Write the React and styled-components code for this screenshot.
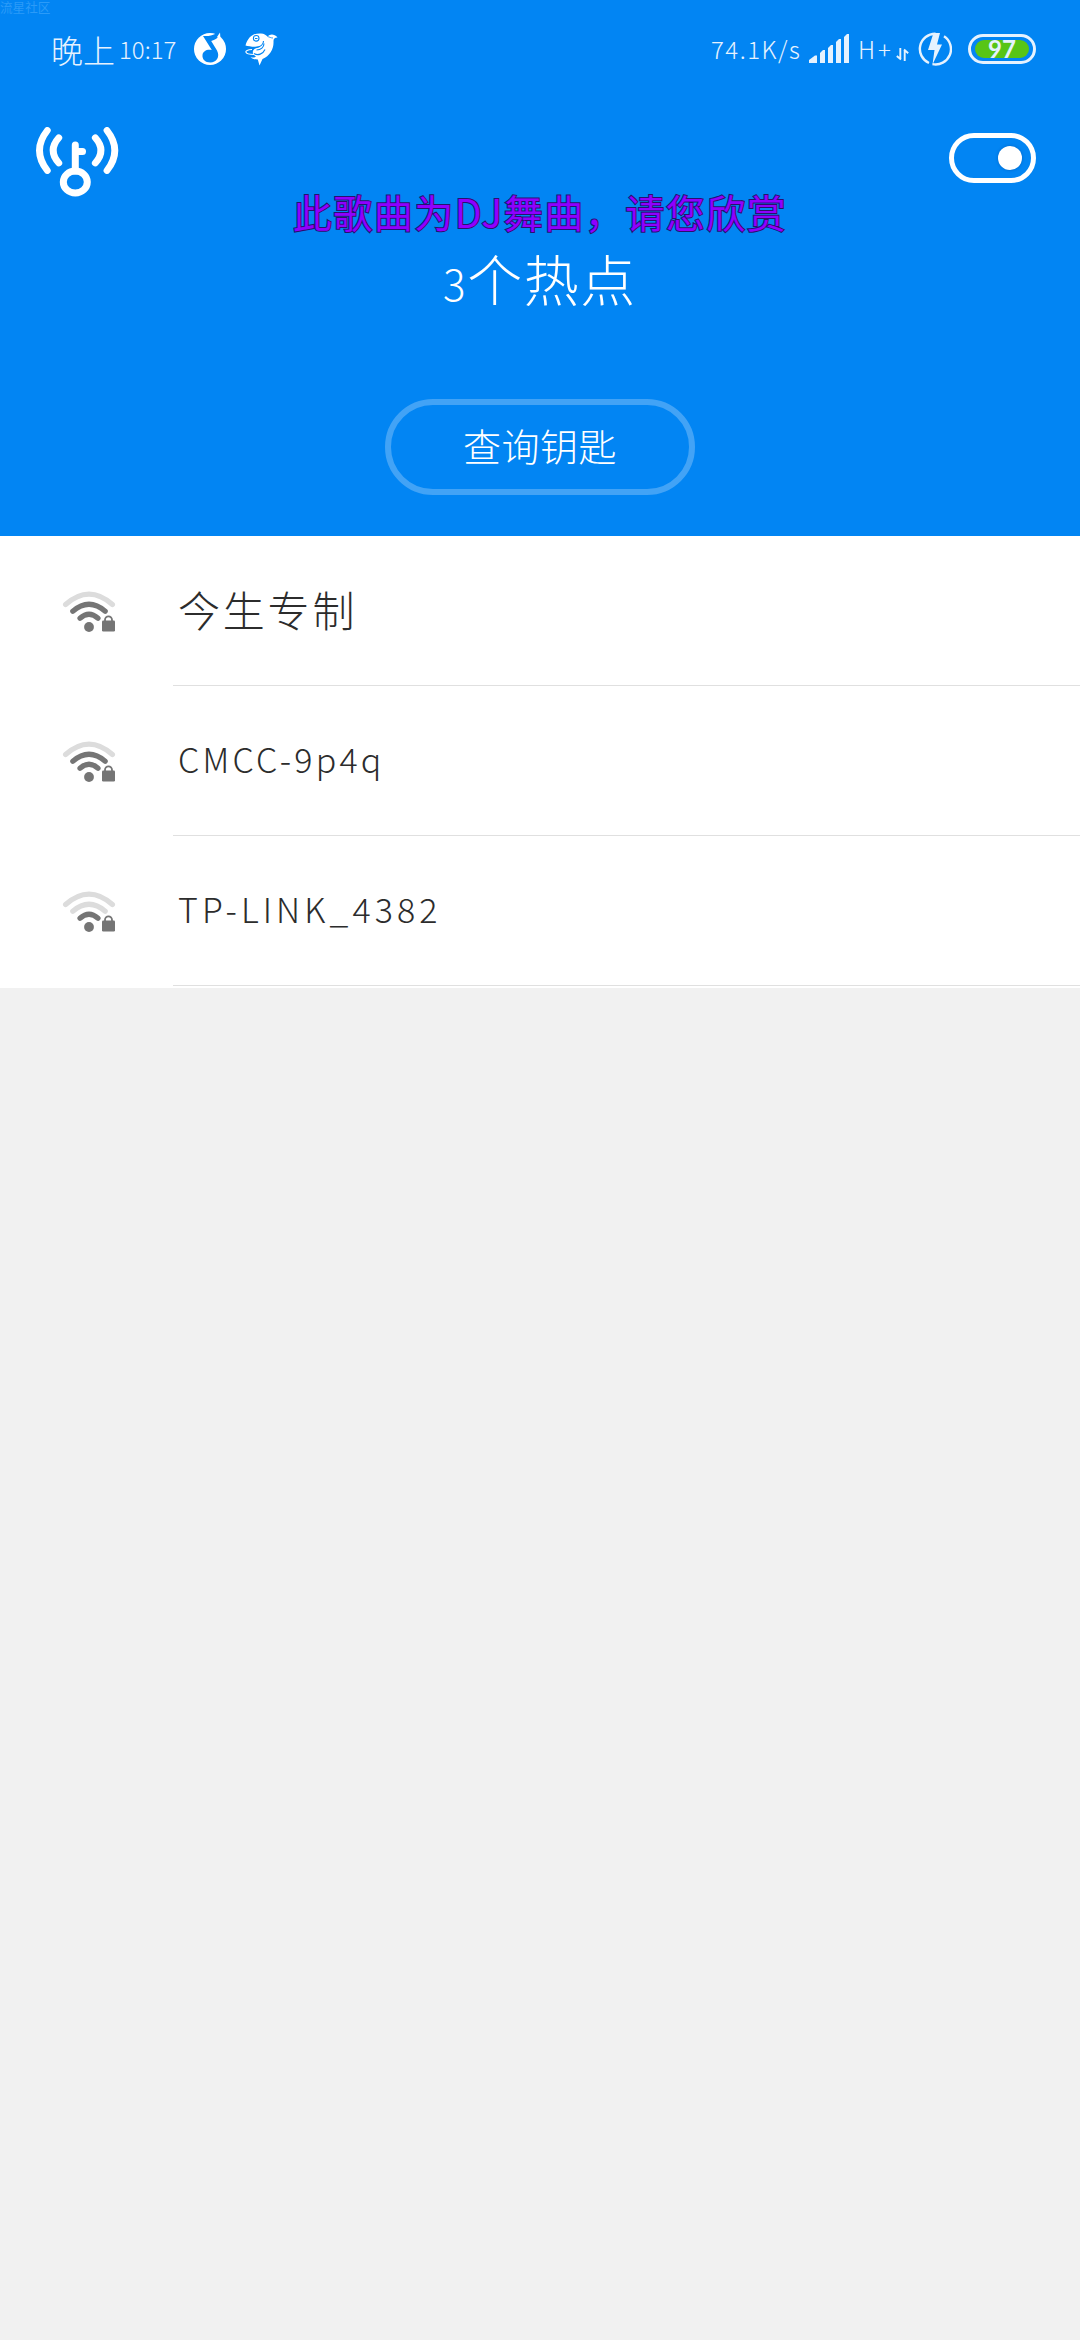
import styled, { createGlobalStyle } from "styled-components";

const GlobalStyles = createGlobalStyle`
  * {
    box-sizing: border-box;
  }
  body {
    margin: 0;
    background: #f1f1f1;
    font-family: "Noto Sans CJK SC", "Noto Sans", sans-serif;
    font-weight: 300;
  }
  svg {
    display: block;
    flex: none;
  }
`;

const Page = styled.div`
  position: relative;
  width: 1080px;
  min-height: 2340px;
  background: #f1f1f1;
`;

const Watermark = styled.span`
  position: absolute;
  top: 0;
  left: 0;
  font-size: 12.6px;
  line-height: 13px;
  font-weight: 400;
  color: #2b9bf8;
`;

const Header = styled.header`
  height: 536px;
  background: #0285f3;
  color: #fff;
  display: flex;
  flex-direction: column;
  align-items: center;
`;

const StatusBar = styled.div`
  width: 100%;
  height: 97px;
  padding: 0 44px 0 51px;
  display: flex;
  justify-content: space-between;
  color: #e6f2fe;
`;

const StatusGroup = styled.div`
  display: flex;
  align-items: center;
`;

const StatusText = styled.span`
  width: ${({ $width }) => $width}px;
  font-size: 24px;
  letter-spacing: ${({ $spacing }) => $spacing || 0}px;
  line-height: 34px;
  white-space: nowrap;
`;

const Clock = styled(StatusText)`
  display: flex;
  align-items: center;
  margin-right: 17px;
`;

const ClockPeriod = styled.span`
  font-size: 32px;
  letter-spacing: 0;
  margin-right: 4px;
`;

const NetworkType = styled(StatusText)`
  padding-left: 8px;
`;

const Gap = styled.span`
  width: ${({ $width }) => $width}px;
`;

const Battery = styled.div`
  width: 68px;
  height: 30px;
  margin-left: 16px;
  padding: 3px 4px;
  border: 3px solid #e6f2fe;
  border-radius: 15px;
`;

const BatteryLevel = styled.div`
  height: 18px;
  border-radius: 9px;
  background: #58c516;
  font-family: Lato, sans-serif;
  font-size: 24px;
  font-weight: 700;
  line-height: 18px;
  text-align: center;
`;

const TopBar = styled.div`
  width: 100%;
  height: 96px;
  padding: 30px 44px 0 35px;
  display: flex;
  justify-content: space-between;
  align-items: flex-start;
`;

const Switch = styled.div`
  width: 87px;
  height: 50px;
  margin-top: 6px;
  padding: 0 9px;
  border: 5px solid #fff;
  border-radius: 25px;
  display: flex;
  align-items: center;
  justify-content: flex-end;
`;

const Knob = styled.span`
  width: 24px;
  height: 24px;
  border-radius: 50%;
  background: #fff;
  box-shadow: 0 0 3px rgba(0, 40, 110, 0.35);
`;

const Lyric = styled.p`
  margin: 0;
  height: 41px;
  line-height: 36px;
  font-size: 39px;
  font-weight: 400;
  letter-spacing: 1.5px;
  white-space: nowrap;
  color: #8f00ff;
  paint-order: stroke fill;
  -webkit-text-stroke: 2px #28106e;
`;

const Title = styled.h1`
  margin: 14px 0 0;
  height: 66px;
  line-height: 58px;
  font-size: 55px;
  font-weight: 300;
  letter-spacing: 1.6px;
`;

const Digit = styled.span`
  font-size: 42px;
`;

const KeyButton = styled.button`
  width: 310px;
  height: 96px;
  margin-top: 85px;
  padding: 0 0 4px;
  border: 6px solid #42a3f6;
  border-radius: 48px;
  background: none;
  color: #fff;
  font: inherit;
  font-size: 38px;
  letter-spacing: 0.5px;
  line-height: 1;
`;

const HotspotList = styled.ul`
  margin: 0;
  padding: 0 0 2px;
  list-style: none;
  background: #fff;
`;

const HotspotRow = styled.li`
  height: 150px;
  padding-left: 62px;
  display: flex;
  align-items: center;

  > svg {
    margin-top: 2px;
  }
`;

const HotspotName = styled.div`
  flex: 1;
  height: 150px;
  margin-left: 57px;
  padding-left: 5px;
  border-bottom: 1px solid #e0e0e0;
  line-height: 146px;
  font-size: ${({ $size }) => $size}px;
  letter-spacing: ${({ $spacing }) => $spacing}px;
  color: #2c2c2c;
  white-space: nowrap;
`;

const hotspots = [
  { name: "今生专制", level: 2, size: 42, spacing: 2.8 },
  { name: "CMCC-9p4q", level: 2, size: 34, spacing: 3.2 },
  { name: "TP-LINK_4382", level: 1, size: 34, spacing: 4.1 },
];

function MusicIcon() {
  return (
    <svg width="34" height="34" viewBox="0 0 34 34">
      <circle cx="17" cy="17" r="16" fill="#fff" />
      <path
        d="M10 4C15 4.5 20 3.5 25.5 0L27 2C25 6 22 8 18.2 9L24 18.5C27.5 25 23 30.5 17.5 30.5C12 30.5 9 27 9.5 23C10 19 14 17 18.8 18Z"
        fill="#0285f3"
      />
      <path d="M24 5 27 .5 27.5 7Z" fill="#fff" />
    </svg>
  );
}

function DolphinIcon() {
  return (
    <svg width="34" height="34" viewBox="0 0 34 34">
      <path
        d="M1.5 13.5C4 5 9 1 17 1.5C20 1.5 22 3 23.5 4.5C26 2 30 1.5 33.5 5.5C30.5 5.5 29.5 7 29.5 9C30 17 26 24 18.5 27L15.5 33.5L13.8 27.5C11 27.5 8 27 6.5 25C9 26 11 25.5 12 24.5C8 22.5 8 19 10.5 17C12.5 16 15 15.5 16.5 14C12 15.5 5 14.5 1.5 13.5Z"
        fill="#fff"
      />
      <g fill="none" stroke="#0285f3" strokeWidth="1.1">
        <circle cx="12.2" cy="6.3" r="2.8" />
        <path d="M11 6.5h2.5M12 15.5C17 15 19.5 12 19.5 9M12.5 18C17 18 20 15 20 11.5M10 21.5C14 24 19 22 21 17.5" />
        <path d="M23.5 4.5c2 .5 3.5 1.5 5.5 1.5" strokeWidth=".8" />
      </g>
      <path d="M8 17.5C-1 18 0 22.5 10 22.5" fill="none" stroke="#fff" strokeWidth="1.1" />
    </svg>
  );
}

function SignalIcon() {
  return (
    <svg width="41" height="30" viewBox="0 0 41 30" fill="#e6f2fe">
      <path d="M0 29v-3l6-4.5h2V29Z" />
      <path d="M11 29V19l3-3h2v13Z" />
      <path d="M19 29V14l3-3h2v18Z" />
      <path d="M27 29V8l3-3h2v24Z" />
      <path d="M35 29V3l3-3h2v29Z" />
    </svg>
  );
}

function DataArrows() {
  return (
    <svg width="13" height="25" viewBox="0 -12 13 25" fill="none" stroke="#e6f2fe" strokeWidth="1.9">
      <path d="M4.3 0v11M5 11.5.8 8M8.7 13V2M8 1.5l4.2 3.7" />
    </svg>
  );
}

function ChargeIcon() {
  return (
    <svg width="34" height="34" viewBox="0 0 34 34">
      <g fill="none" stroke="#e6f2fe" strokeWidth="2.4">
        <path d="M17.5 1.7A15.3 15.3 0 0 0 11 31" />
        <path d="M26 4.3A15.3 15.3 0 0 1 14.5 32.1" />
      </g>
      <path d="M15.5 1 22 .9 19 12.5h5L14.5 32.5 16.5 18H10Z" fill="#e6f2fe" />
    </svg>
  );
}

function KeyLogo() {
  return (
    <svg width="85" height="72" viewBox="0 0 85 72" fill="none" stroke="#fff" strokeWidth="6.8" strokeLinecap="round">
      <path d="M12.3 43.5Q-3.3 23.3 12.3 3.5" />
      <path d="M23.8 36Q12.5 23.5 23.8 10.8" />
      <path d="M60.3 36Q71.6 23.5 60.3 10.8" />
      <path d="M72 43.5Q87.6 23.3 72 3.5" />
      <ellipse cx="40.3" cy="55" rx="12" ry="11" strokeWidth="7" />
      <path d="M40.3 44V18" strokeWidth="7" />
      <path d="M41 24.5h6.5" strokeWidth="7" />
    </svg>
  );
}

function WifiIcon({ level }) {
  const on = "#757575";
  const off = "#dcdcdc";
  return (
    <svg width="54" height="42" viewBox="0 0 54 42" fill="none" strokeWidth="5.2" strokeLinecap="round">
      <path d="M3.6 13.5Q27 -7.2 50.4 13.5" stroke={level > 2 ? on : off} />
      <path d="M10.8 20.3Q27 6.3 43.2 20.3" stroke={level > 1 ? on : off} />
      <path d="M18 27.2Q27 19.2 36 27.2" stroke={on} />
      <circle cx="27" cy="36" r="4.9" fill={on} />
      <rect x="40" y="29.5" width="13" height="11" rx="1.2" fill={on} />
      <path d="M43 31v-2.2a3.5 3.5 0 0 1 7 0V31" stroke={on} strokeWidth="1.8" />
    </svg>
  );
}

function App() {
  return (
    <>
      <GlobalStyles />
      <Page>
        <Header>
          <StatusBar>
            <StatusGroup>
              <Clock $width={125}>
                <ClockPeriod>晚上</ClockPeriod>10:17
              </Clock>
              <MusicIcon />
              <Gap $width={17} />
              <DolphinIcon />
            </StatusGroup>
            <StatusGroup>
              <StatusText $width={98} $spacing={1.5}>74.1K/s</StatusText>
              <SignalIcon />
              <NetworkType $width={46} $spacing={3}>H+</NetworkType>
              <DataArrows />
              <Gap $width={9} />
              <ChargeIcon />
              <Battery>
                <BatteryLevel>97</BatteryLevel>
              </Battery>
            </StatusGroup>
          </StatusBar>
          <TopBar>
            <KeyLogo />
            <Switch>
              <Knob />
            </Switch>
          </TopBar>
          <Lyric>此歌曲为DJ舞曲，请您欣赏</Lyric>
          <Title>
            <Digit>3</Digit>个热点
          </Title>
          <KeyButton>查询钥匙</KeyButton>
        </Header>
        <HotspotList>
          {hotspots.map(({ name, level, size, spacing }) => (
            <HotspotRow key={name}>
              <WifiIcon level={level} />
              <HotspotName $size={size} $spacing={spacing}>
                {name}
              </HotspotName>
            </HotspotRow>
          ))}
        </HotspotList>
        <Watermark>流星社区</Watermark>
      </Page>
    </>
  );
}

export default App;
